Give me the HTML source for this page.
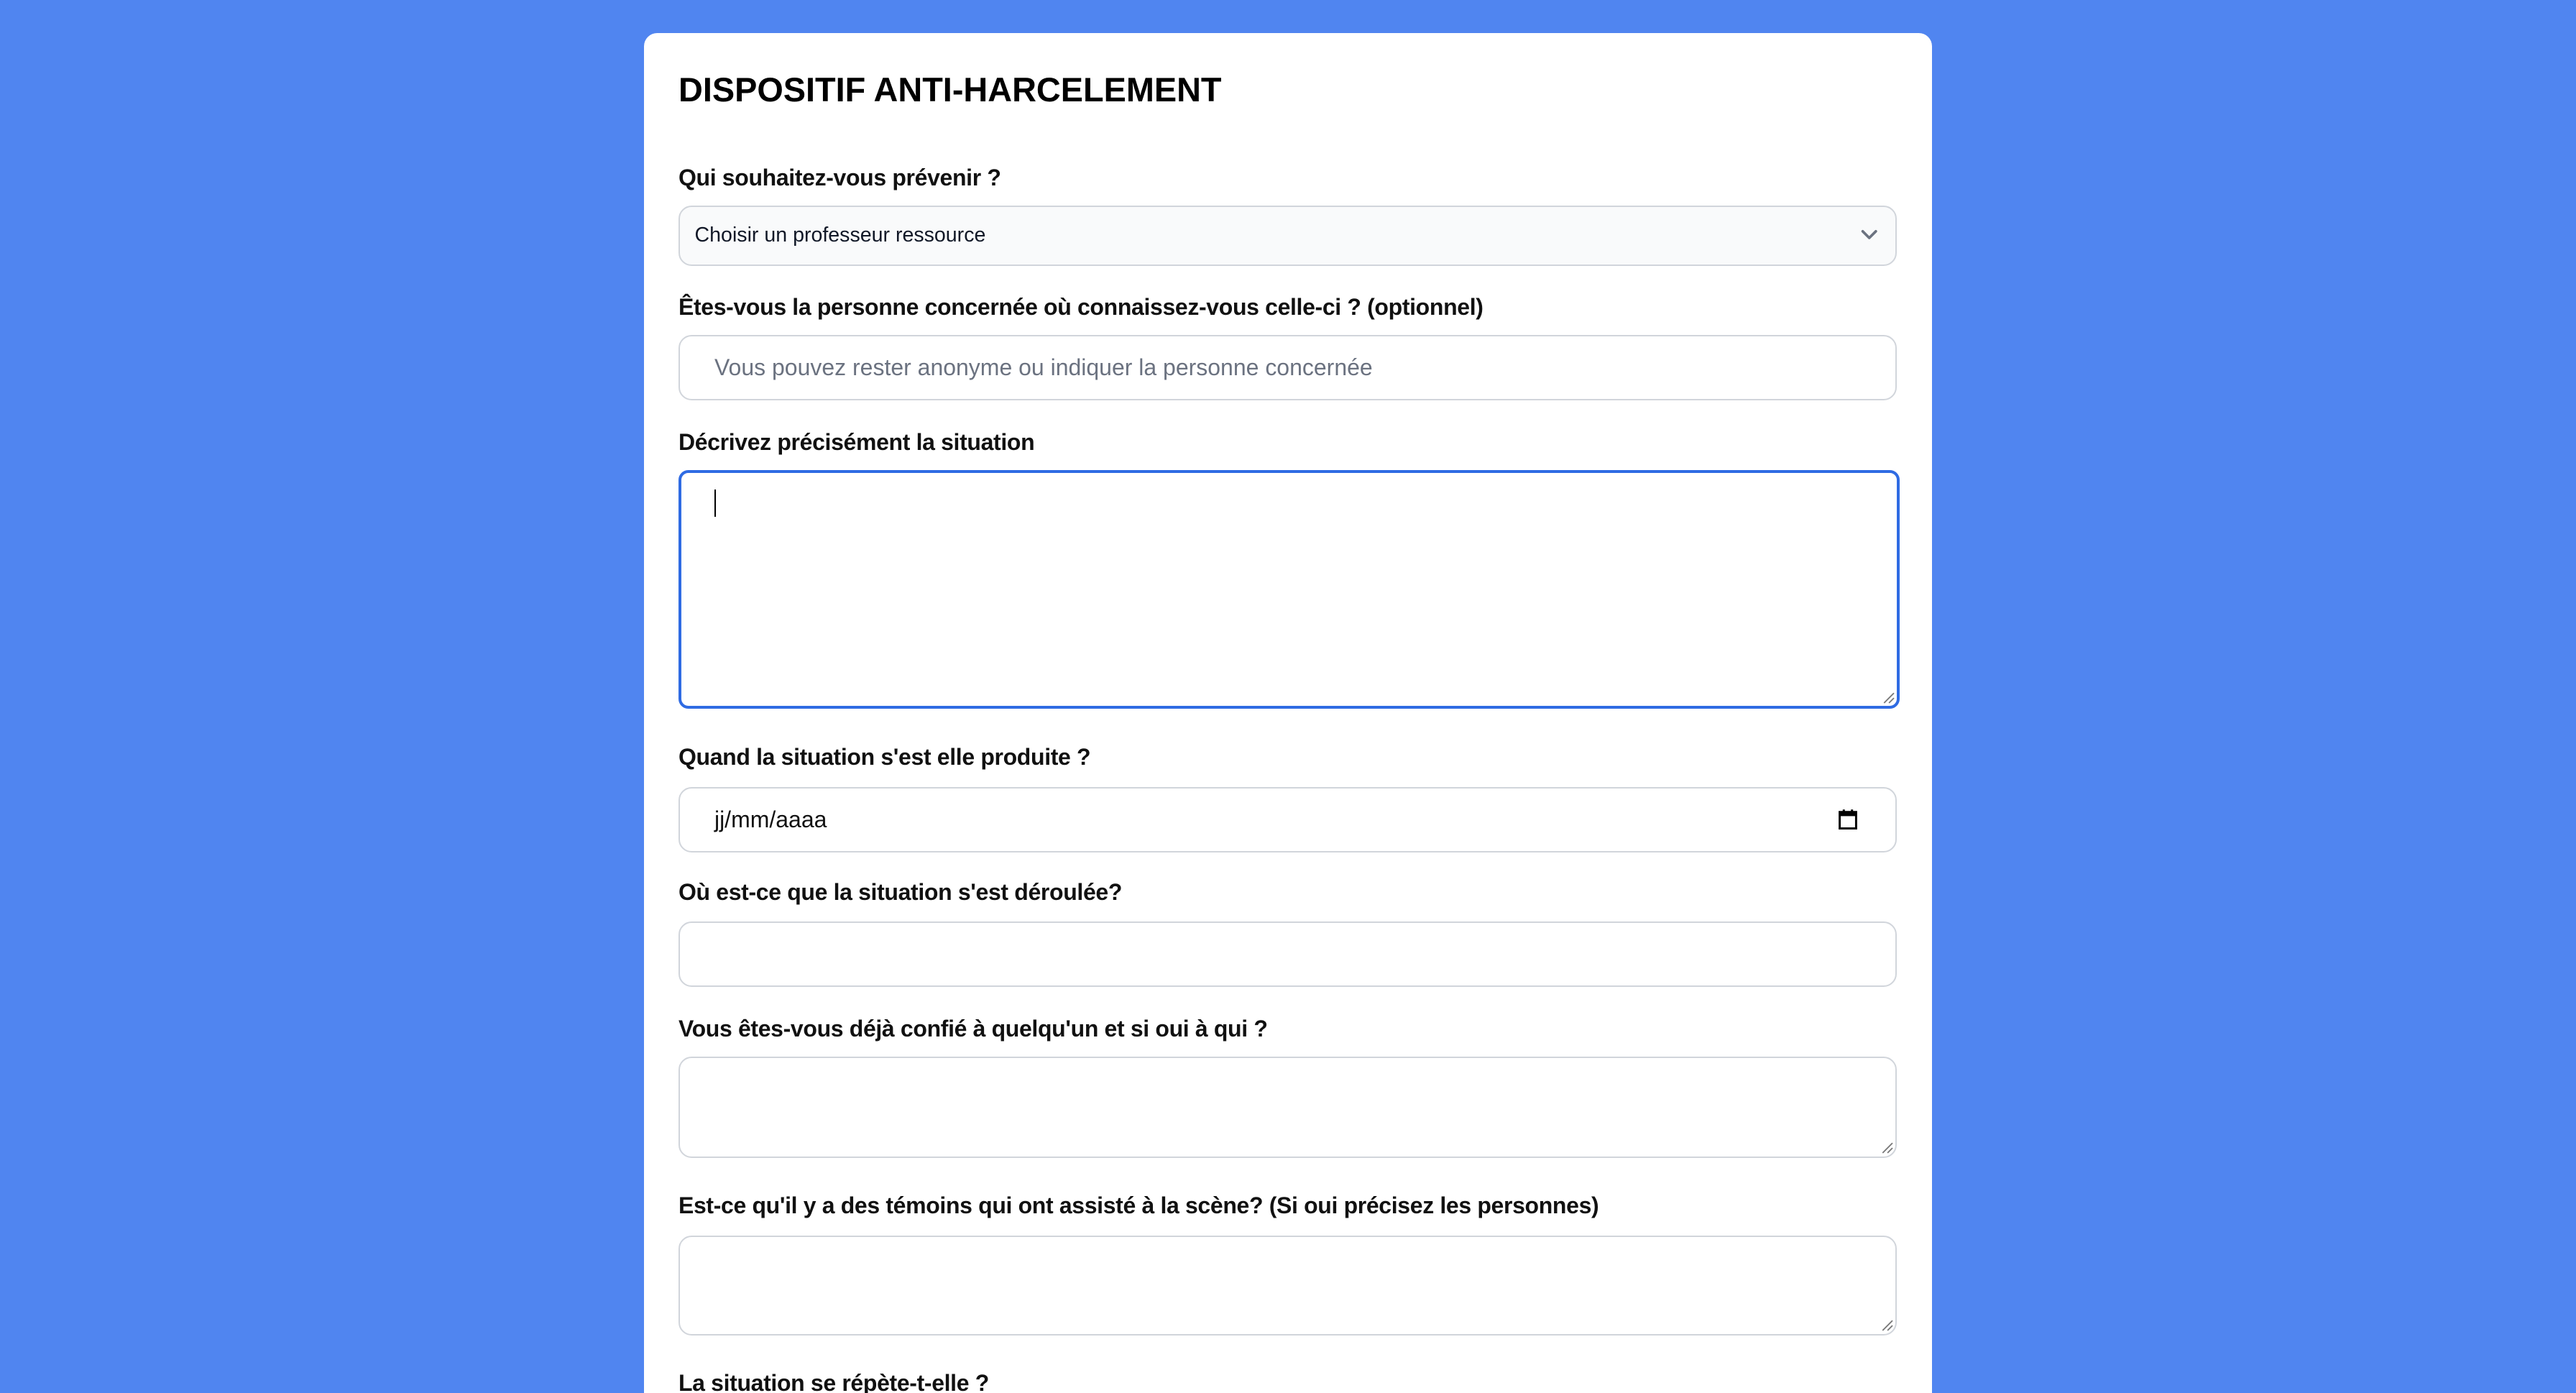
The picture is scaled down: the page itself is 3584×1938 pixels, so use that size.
<!DOCTYPE html>
<html style="height:1938px;overflow:hidden"><head><meta charset="utf-8"><style>
html,body{margin:0;padding:0;}
body{width:3584px;height:1938px;overflow:hidden;background:#5085f0;font-family:"Liberation Sans",sans-serif;}
#w{zoom:2.285714;position:relative;width:1568px;height:848px;overflow:hidden;}
.card{position:absolute;left:392px;top:20px;width:784px;height:828px;background:#fff;border-radius:8px 8px 0 0;}
.t{position:absolute;left:413px;font-size:20.5px;font-weight:700;color:#000;letter-spacing:0px;}
.l{position:absolute;left:413px;font-size:14px;font-weight:700;color:#111;letter-spacing:-0.15px;line-height:16px;}
.b{position:absolute;left:413px;width:740px;border:1px solid #d1d5db;border-radius:8px;background:#fff;}
.sel{background:#f9fafb;}
.tx{position:absolute;font-size:12.5px;color:#111827;}
.ph{position:absolute;font-size:14px;color:#6b7280;}
.rs{position:absolute;right:1px;bottom:1px;width:8px;height:8px;}
</style></head><body><div id="w">
<div class="card"></div>
<div class="t" style="top:43px">DISPOSITIF ANTI-HARCELEMENT</div>

<div class="l" style="top:100px">Qui souhaitez-vous prévenir ?</div>
<div class="b sel" style="top:125px;height:35px">
 <span class="tx" style="left:9px;top:10px">Choisir un professeur ressource</span>
 <svg style="position:absolute;right:10px;top:12px" width="12" height="10" viewBox="0 0 12 10"><path d="M2 3 L6 7 L10 3" fill="none" stroke="#6b7280" stroke-width="1.6" stroke-linecap="round" stroke-linejoin="round"/></svg>
</div>

<div class="l" style="top:179px">Êtes-vous la personne concernée où connaissez-vous celle-ci ? (optionnel)</div>
<div class="b" style="top:204px;height:38px">
 <span class="ph" style="left:21px;top:11px">Vous pouvez rester anonyme ou indiquer la personne concernée</span>
</div>

<div class="l" style="top:261px">Décrivez précisément la situation</div>
<div class="b" style="top:286px;height:142px;border:2px solid #2f6be3;border-radius:6px;">
 <div style="position:absolute;left:20px;top:10px;width:1px;height:17px;background:#000"></div>
 <svg class="rs" viewBox="0 0 8 8"><path d="M1 7 L7 1 M4 7 L7 4" stroke="#777" stroke-width="0.8"/></svg>
</div>

<div class="l" style="top:453px">Quand la situation s'est elle produite ?</div>
<div class="b" style="top:479px;height:38px">
 <span class="tx" style="left:21px;top:11px;font-size:14px;color:#111">jj/mm/aaaa</span>
 <svg style="position:absolute;left:704px;top:12px" width="14" height="14" viewBox="0 0 14 14"><rect x="2" y="2.5" width="10" height="10" fill="none" stroke="#000" stroke-width="1.3"/><rect x="2" y="2.5" width="10" height="2.5" fill="#000"/><path d="M4.5 1v2M9.5 1v2" stroke="#000" stroke-width="1.3"/></svg>
</div>

<div class="l" style="top:535px">Où est-ce que la situation s'est déroulée?</div>
<div class="b" style="top:561px;height:38px"></div>

<div class="l" style="top:618px">Vous êtes-vous déjà confié à quelqu'un et si oui à qui ?</div>
<div class="b" style="top:643px;height:60px"><svg class="rs" viewBox="0 0 8 8"><path d="M1 7 L7 1 M4 7 L7 4" stroke="#777" stroke-width="0.8"/></svg></div>

<div class="l" style="top:726px">Est-ce qu'il y a des témoins qui ont assisté à la scène? (Si oui précisez les personnes)</div>
<div class="b" style="top:752px;height:59px"><svg class="rs" viewBox="0 0 8 8"><path d="M1 7 L7 1 M4 7 L7 4" stroke="#777" stroke-width="0.8"/></svg></div>

<div class="l" style="top:834px">La situation se répète-t-elle ?</div>
</div></body></html>
